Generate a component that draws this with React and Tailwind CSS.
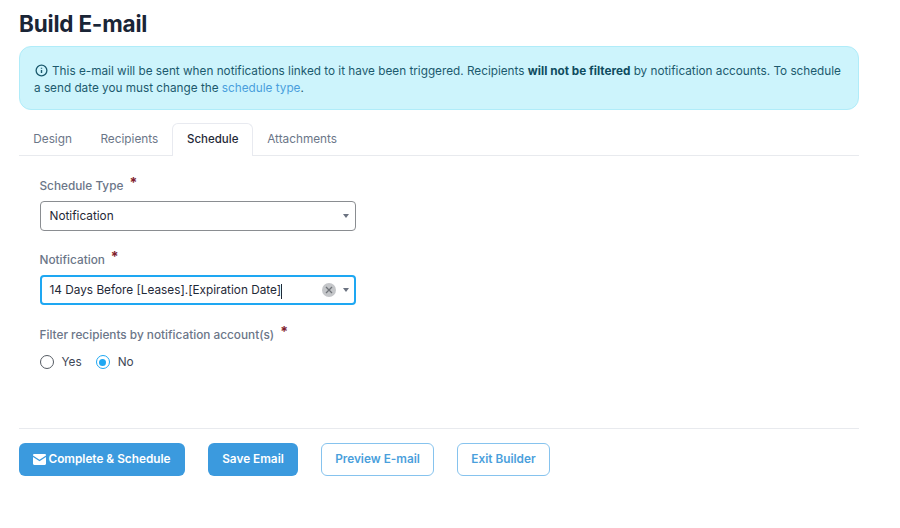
const Req = () => <span className="ml-[6px] text-[14px] leading-[14px] text-[#7f1d2d] font-bold relative -top-[4px]">*</span>

const Caret = () => (
  <span className="w-0 h-0 border-x-[3.5px] border-x-transparent border-t-[4px] border-t-[#6b7280]" />
)

const App = () => {
  const tabs = ['Design', 'Recipients', 'Schedule', 'Attachments']

  return (
    <div className="w-[900px] h-[528px] bg-white overflow-hidden font-['Inter',sans-serif] pl-[19px] pr-[41px] pt-[9px]">
      <h1 className="text-[22.5px] leading-[30px] font-bold text-[#1a2536] tracking-[-0.2px]">Build E-mail</h1>

      {/* Info alert */}
      <div className="mt-[7px] h-[64px] rounded-[12px] border border-[#b0ecf9] bg-[#cdf4fc] px-[14px] pt-[15.5px] text-[11.75px] leading-[17.5px] text-[#1c5a6e]">
        <svg className="inline-block w-[13px] h-[13px] mr-[4px] ml-[1px] -mt-[2px] align-middle" viewBox="0 0 14 14" fill="none" stroke="currentColor" strokeWidth="1.4">
          <circle cx="7" cy="7" r="5.8" />
          <path d="M7 6.4v3.2M7 4v1.2" strokeWidth="1.5" />
        </svg>
        This e-mail will be sent when notifications linked to it have been triggered. Recipients{' '}
        <strong className="font-bold text-[#0f4c5f]">will not be filtered</strong> by notification accounts. To schedule a send date you must change the{' '}
        <span className="text-[#4a9fdc]">schedule type</span>.
      </div>

      {/* Tabs */}
      <div className="mt-[13px] h-[33px] flex border-b border-[#e8eaee] text-[11.8px]">
        {tabs.map((tab) => (
          <div
            key={tab}
            className={
              tab === 'Schedule'
                ? 'h-[33px] px-[13.5px] flex items-center rounded-t-[6px] border border-b-0 border-[#e8eaf0] bg-white text-[11.5px] text-[#1f2937] font-medium'
                : 'h-[32px] pt-px px-[14.25px] flex items-center text-[#6b7688]'
            }
          >
            {tab}
          </div>
        ))}
      </div>

      {/* Form */}
      <div className="pl-[20.5px] pt-[22px] text-[11.8px]">
        <div className="h-[17px] leading-[17px] text-[#6b7688] font-medium flex items-center">Schedule Type <Req /></div>
        <div className="mt-[6px] w-[316px] h-[30px] rounded-[4px] border border-[#8a8d91] flex items-center justify-between pl-[9px] pr-[6px] text-[#1f2937]">
          <span className="pt-[2px]">Notification</span>
          <Caret />
        </div>

        <div className="mt-[21px] h-[17px] leading-[17px] text-[#6b7688] font-medium flex items-center">Notification <Req /></div>
        <div className="mt-[6px] w-[316px] h-[30px] rounded-[4px] border-2 border-[#1ea7f2] flex items-center justify-between pl-[8px] pr-[5px] text-[#1f2937]">
          <span className="flex items-center pt-[2px]">
            14 Days Before [Leases].[Expiration Date]
            <span className="w-px h-[15px] bg-[#1f2937]" />
          </span>
          <span className="flex items-center gap-[7px]">
            <span className="w-[14px] h-[14px] rounded-full bg-[#c4c6c9] flex items-center justify-center">
              <svg className="w-[10px] h-[10px]" viewBox="0 0 10 10" stroke="#6f7378" strokeWidth="1.3">
                <path d="M2 2l6 6M8 2l-6 6" />
              </svg>
            </span>
            <Caret />
          </span>
        </div>

        <div className="mt-[22px] h-[17px] leading-[17px] text-[#6b7688] font-medium flex items-center">Filter recipients by notification account(s) <Req /></div>
        <div className="mt-[11px] flex items-center h-[14px] text-[#3d4756]">
          <span className="w-[14px] h-[14px] rounded-full border-[1.5px] border-[#555b63]" />
          <span className="ml-[8px] pt-[2px]">Yes</span>
          <span className="ml-[14px] w-[14px] h-[14px] rounded-full border-[1.5px] border-[#1ea7f2] flex items-center justify-center">
            <span className="w-[7px] h-[7px] rounded-full bg-[#1ea7f2]" />
          </span>
          <span className="ml-[8px] pt-[2px]">No</span>
        </div>
      </div>

      {/* Footer actions */}
      <div className="mt-[59px] border-t border-[#e8eaee] pt-[13.5px] flex text-[11.8px] font-semibold">
        <button className="w-[166px] h-[33px] pt-px rounded-[6px] bg-[#3b9ade] text-white flex items-center justify-center gap-[2px]">
          <svg className="w-[13px] h-[11px] -mt-px" viewBox="0 0 13 11" fill="currentColor">
            <path d="M1.2 0h10.6c.6 0 1.2.5 1.2 1.2v.3L6.500 5.800 0 1.500v-.3C0 .5.6 0 1.200 0z" />
            <path d="M0 3l6.500 4.300L13 3v6.800c0 .7-.6 1.200-1.200 1.200H1.200C.6 11 0 10.500 0 9.800z" />
          </svg>
          Complete &amp; Schedule
        </button>
        <button className="ml-[23px] w-[90px] h-[33px] pt-px rounded-[6px] bg-[#3b9ade] text-white">Save Email</button>
        <button className="ml-[23px] w-[113px] h-[33px] pt-px rounded-[6px] border-[1.5px] border-[#86c3ee] text-[#4a9fdc]">Preview E-mail</button>
        <button className="ml-[23px] w-[93px] h-[33px] pt-px rounded-[6px] border-[1.5px] border-[#86c3ee] text-[#4a9fdc]">Exit Builder</button>
      </div>
    </div>
  )
}

export default App
